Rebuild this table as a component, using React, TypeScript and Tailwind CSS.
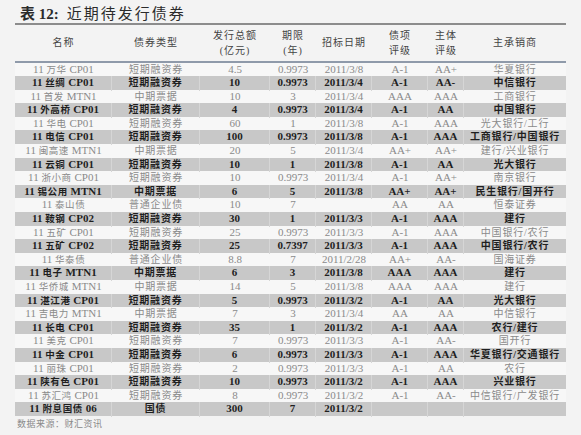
const rows: string[][] = [
  ['11 万华 CP01', '短期融资券', '4.5', '0.9973', '2011/3/8', 'A-1', 'AA+', '华夏银行'],
  ['11 丝绸 CP01', '短期融资券', '10', '0.9973', '2011/3/4', 'A-1', 'AA-', '中信银行'],
  ['11 首发 MTN1', '中期票据', '10', '3', '2011/3/4', 'AAA', 'AAA', '工商银行'],
  ['11 外高桥 CP01', '短期融资券', '4', '0.9973', '2011/3/4', 'A-1', 'AA', '中国银行'],
  ['11 华电 CP01', '短期融资券', '60', '1', '2011/3/8', 'A-1', 'AAA', '光大银行/工行'],
  ['11 电信 CP01', '短期融资券', '100', '0.9973', '2011/3/8', 'A-1', 'AAA', '工商银行/中国银行'],
  ['11 闽高速 MTN1', '中期票据', '20', '5', '2011/3/4', 'AA+', 'AA+', '建行/兴业银行'],
  ['11 云铜 CP01', '短期融资券', '10', '1', '2011/3/8', 'A-1', 'AA', '光大银行'],
  ['11 浙小商 CP01', '短期融资券', '10', '0.9973', '2011/3/4', 'A-1', 'AA+', '南京银行'],
  ['11 锡公用 MTN1', '中期票据', '6', '5', '2011/3/8', 'AA+', 'AA+', '民生银行/国开行'],
  ['11 泰山债', '普通企业债', '10', '7', '', 'AA', 'AA', '恒泰证券'],
  ['11 鞍钢 CP02', '短期融资券', '30', '1', '2011/3/3', 'A-1', 'AAA', '建行'],
  ['11 五矿 CP01', '短期融资券', '25', '0.9973', '2011/3/3', 'A-1', 'AAA', '中国银行/农行'],
  ['11 五矿 CP02', '短期融资券', '25', '0.7397', '2011/3/3', 'A-1', 'AAA', '中国银行/农行'],
  ['11 华泰债', '普通企业债', '8.8', '7', '2011/2/28', 'AA+', 'AA-', '国海证券'],
  ['11 电子 MTN1', '中期票据', '6', '3', '2011/3/8', 'AAA', 'AAA', '建行'],
  ['11 华侨城 MTN1', '中期票据', '14', '5', '2011/3/8', 'AAA', 'AAA', '建行'],
  ['11 湛江港 CP01', '短期融资券', '5', '0.9973', '2011/3/2', 'A-1', 'AA', '光大银行'],
  ['11 吉电力 MTN1', '中期票据', '7', '3', '2011/3/4', 'AA', 'AA', '中信银行'],
  ['11 长电 CP01', '短期融资券', '35', '1', '2011/3/2', 'A-1', 'AAA', '农行/建行'],
  ['11 美克 CP01', '短期融资券', '7', '0.9973', '2011/3/3', 'A-1', 'AA-', '国开行'],
  ['11 中金 CP01', '短期融资券', '6', '0.9973', '2011/3/3', 'A-1', 'AAA', '华夏银行/交通银行'],
  ['11 丽珠 CP01', '短期融资券', '2', '0.9973', '2011/3/3', 'A-1', 'AA', '农行'],
  ['11 陕有色 CP01', '短期融资券', '10', '0.9973', '2011/3/2', 'A-1', 'AAA', '兴业银行'],
  ['11 苏汇鸿 CP01', '短期融资券', '8', '0.9973', '2011/3/2', 'A-1', 'AA-', '中信银行/广发银行'],
  ['11 附息国债 06', '国债', '300', '7', '2011/3/2', '', '', ''],
];

const headers: string[][] = [
  ['名称'],
  ['债券类型'],
  ['发行总额', '(亿元)'],
  ['期限', '(年)'],
  ['招标日期'],
  ['债项', '评级'],
  ['主体', '评级'],
  ['主承销商'],
];

const grid = 'grid grid-cols-[97px_88px_70px_46px_56px_56px_36px_102px]';
const font = { fontFamily: '"Liberation Serif", "Noto Sans CJK SC", serif' };

// CJK runs are set a touch smaller than the Latin digits, as in the source table
function Mixed({ text }: { text: string }) {
  const parts = text.split(/([\u4e00-\u9fff]+)/).filter(Boolean);
  return (
    <>
      {parts.map((p, i) =>
        /[\u4e00-\u9fff]/.test(p) ? (
          <span key={i} className="text-[9.5px] tracking-[0.6px]">
            {p}
          </span>
        ) : (
          <span key={i}>{p}</span>
        ),
      )}
    </>
  );
}

export default function App() {
  return (
    <div className="w-[581px] h-[435px] bg-[#f3f3f3] overflow-hidden" style={font}>
      <div className="pl-[20px] pt-[5px] h-[23px] flex items-center gap-[8px] text-[#2b2b2b] text-[15px] leading-none">
        <span className="font-bold">表 12:</span>
        <span className="tracking-[2px]">近期待发行债券</span>
      </div>

      <div className="ml-[15px] w-[551px]">
        <div className="h-[1.5px] bg-[#8c8c8c]" />
        <div className={`${grid} h-[36px] text-[10px] leading-[15px] text-[#444] tracking-[1px]`}>
          {headers.map((h, i) => (
            <div key={i} className="flex flex-col items-center justify-center">
              {h.map((t) => (
                <span key={t}>{t}</span>
              ))}
            </div>
          ))}
        </div>
        <div className="h-[2px] bg-[#8f9aaa]" />

        {rows.map((r, i) => {
          const dark = i % 2 === 1;
          return (
            <div
              key={i}
              className={`${grid} h-[13.6px] text-[11px] leading-[13.6px] ${
                dark ? 'bg-[#c8c8c8] text-[#1f1f1f] font-bold' : 'bg-[#f7f7f7] text-[#8a8a8a]'
              }`}
            >
              {r.map((c, j) => (
                <div
                  key={j}
                  className={`text-center whitespace-nowrap ${
                    j === 1 || j === 7 ? 'tracking-[0.8px] text-[10px]' : ''
                  } ${dark && j < 7 ? 'border-r border-[#d6d6d6]' : ''}`}
                >
                  {j === 0 ? <Mixed text={c} /> : c}
                </div>
              ))}
            </div>
          );
        })}
      </div>

      <div className="pl-[17px] pt-[2px] text-[9px] text-[#8a8a8a] tracking-[0.5px]">数据来源：财汇资讯</div>
    </div>
  );
}
